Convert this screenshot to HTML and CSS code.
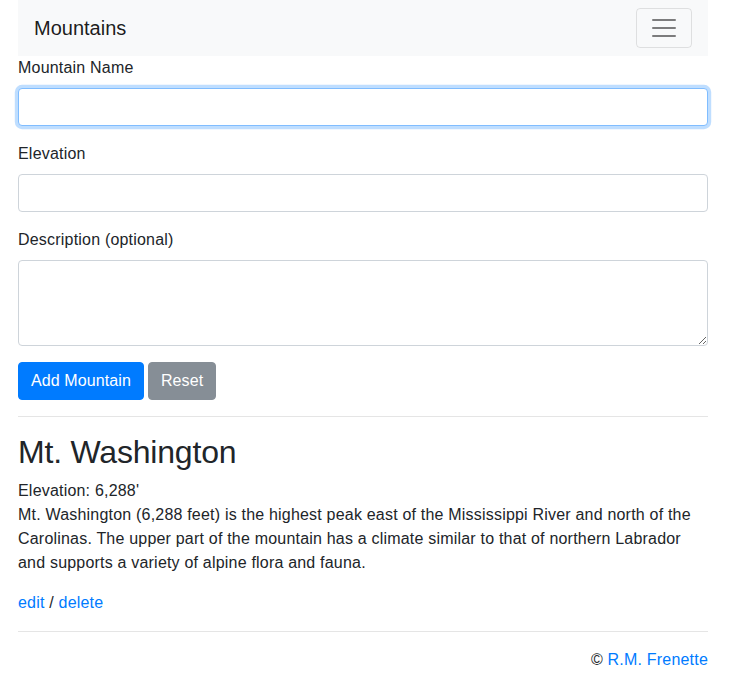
FILE: index.html
```html
<!DOCTYPE html>
<html lang="en">
<head>
<meta charset="utf-8">
<title>Mountains</title>
<link rel="stylesheet" href="styles.css">
</head>
<body>
<div class="container">
  <nav class="navbar">
    <a class="brand" href="#">Mountains</a>
    <button class="toggler" type="button" aria-label="Toggle navigation">
      <svg width="30" height="30" viewBox="0 0 30 30"><path stroke="rgba(0,0,0,0.5)" stroke-width="2" stroke-linecap="round" stroke-miterlimit="10" d="M4 7h22M4 15h22M4 23h22"/></svg>
    </button>
  </nav>
  <form class="form">
    <div class="group">
      <label class="label" for="name">Mountain Name</label>
      <input class="control focused" id="name" type="text" autofocus>
    </div>
    <div class="group">
      <label class="label" for="elev">Elevation</label>
      <input class="control" id="elev" type="text">
    </div>
    <div class="group">
      <label class="label" for="desc">Description (optional)</label>
      <textarea class="control area" id="desc" rows="3"></textarea>
    </div>
    <div class="actions">
      <button class="btn btn-primary" type="button">Add Mountain</button>
      <button class="btn btn-secondary" type="reset">Reset</button>
    </div>
  </form>
  <hr class="rule">
  <article class="mountain">
    <h2 class="title">Mt. Washington</h2>
    <div class="elev">Elevation: 6,288'</div>
    <p class="desc">Mt. Washington (6,288 feet) is the highest peak east of the Mississippi River and north of the Carolinas. The upper part of the mountain has a climate similar to that of northern Labrador and supports a variety of alpine flora and fauna.</p>
    <div class="links"><a href="#">edit</a> / <a href="#">delete</a></div>
  </article>
  <hr class="rule">
  <footer class="footer">© <a href="#">R.M. Frenette</a></footer>
</div>
</body>
</html>
```

FILE: styles.css
```css
* { box-sizing: border-box; }
html, body { margin: 0; padding: 0; }
body {
  font-family: "Liberation Sans", Arial, sans-serif;
  font-size: 16px;
  line-height: 1.5;
  letter-spacing: 0.2px;
  color: #212529;
  background: #fff;
}
a { color: #007bff; text-decoration: none; }
.container {
  width: 690px;
  margin-left: 18px;
}
.navbar {
  display: flex;
  align-items: center;
  justify-content: space-between;
  padding: 8px 16px;
  background: #f8f9fa;
  height: 56px;
}
.brand {
  font-size: 20px;
  line-height: 30px;
  letter-spacing: 0;
  padding: 5px 0;
  color: rgba(0,0,0,0.9);
}
.toggler {
  width: 56px;
  height: 40px;
  padding: 4px 12px;
  background: transparent;
  border: 1px solid rgba(0,0,0,0.1);
  border-radius: 4px;
  display: flex;
  align-items: center;
  justify-content: center;
}
.toggler svg { display: block; }
.group { margin-bottom: 16px; }
.label {
  display: block;
  margin-bottom: 8px;
  line-height: 24px;
}
.control {
  display: block;
  width: 100%;
  height: 38px;
  padding: 6px 12px;
  font: inherit;
  font-size: 16px;
  line-height: 24px;
  color: #495057;
  background: #fff;
  border: 1px solid #ced4da;
  border-radius: 4px;
  outline: none;
}
.control.area { height: 86px; resize: vertical; }
.control.focused {
  border-color: #80bdff;
  box-shadow: 0 0 0 3.2px rgba(0,123,255,0.25);
}
.actions { display: flex; gap: 4px; }
.btn {
  font: inherit;
  font-size: 16px;
  line-height: 24px;
  letter-spacing: 0.1px;
  padding: 6px 12px;
  border: 1px solid transparent;
  border-radius: 4px;
  color: #fff;
  cursor: pointer;
}
.btn-primary { background: #007bff; border-color: #007bff; }
.btn-secondary { background: #868e96; border-color: #868e96; }
.rule {
  margin: 16px 0;
  border: 0;
  border-top: 1px solid rgba(0,0,0,0.1);
  height: 0;
}
.title {
  font-size: 32px;
  font-weight: 500;
  line-height: 1.2;
  letter-spacing: -0.2px;
  margin: 0 0 8px;
}
.elev { line-height: 24px; }
.desc { margin: 0 0 16px; }
.links { line-height: 24px; }
.footer { text-align: right; }
```
